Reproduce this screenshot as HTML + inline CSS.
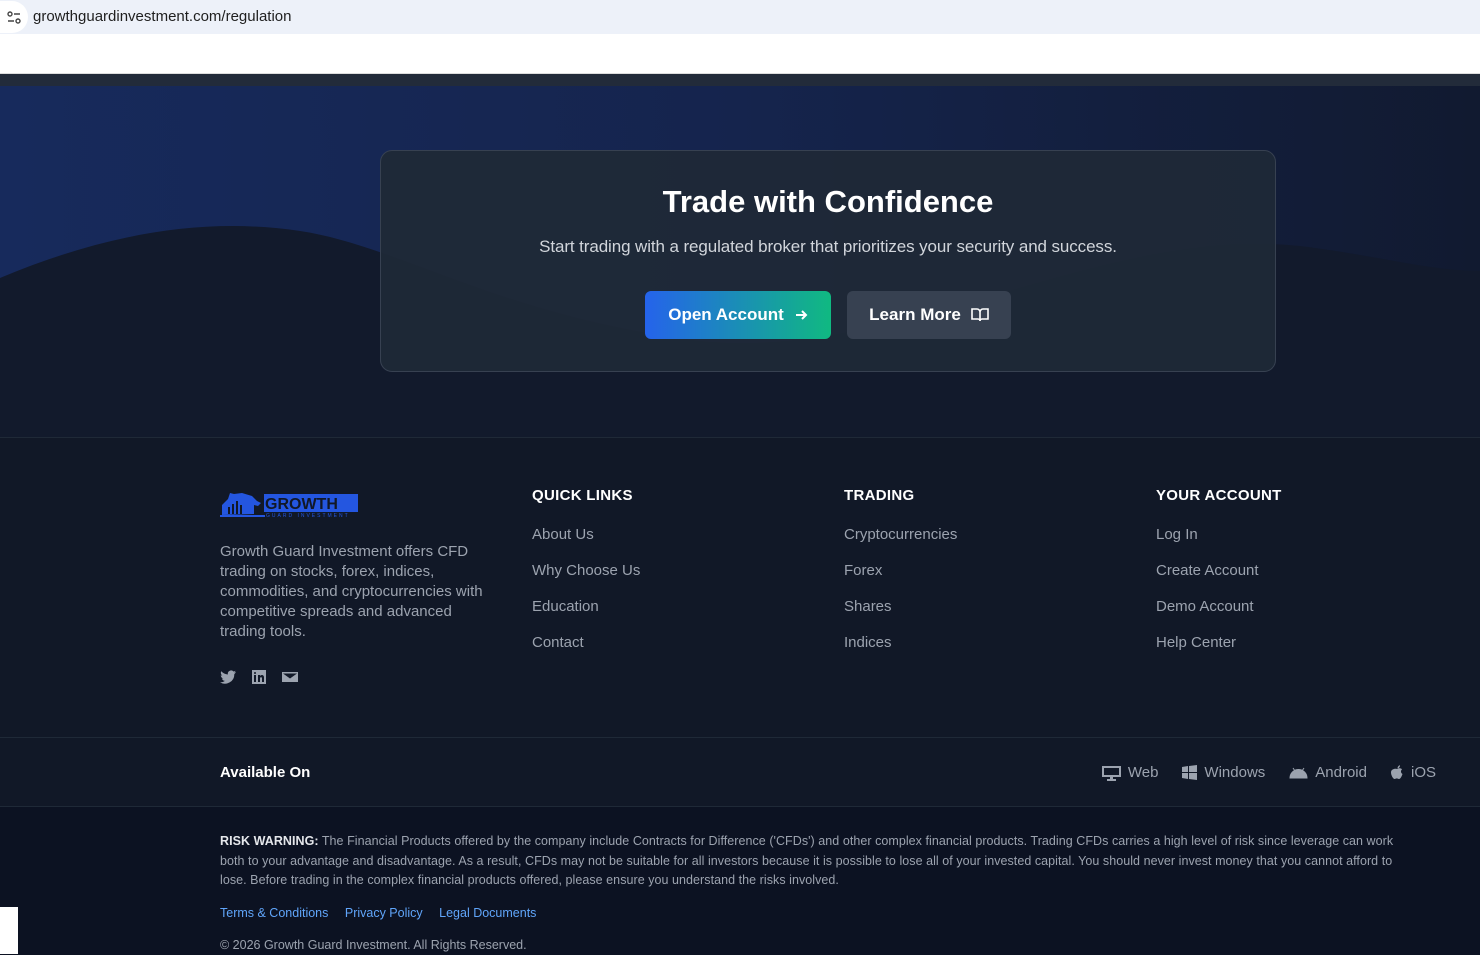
<!DOCTYPE html>
<html><head><meta charset="utf-8"><style>
*{margin:0;padding:0;box-sizing:border-box}
body{width:1480px;height:954px;overflow:hidden;font-family:"Liberation Sans",sans-serif;background:#0f1626;position:relative}
.addr{position:absolute;left:0;top:0;width:1480px;height:34px;background:#edf1f9}
.addr .ic{position:absolute;left:0;top:1px;width:28px;height:32px;background:#fff;border-radius:0 16px 16px 0}
.addr span{position:absolute;left:33px;top:8px;font-size:15px;color:#1f1f1f}
.white{position:absolute;top:34px;left:0;width:1480px;height:40px;background:#fff;border-bottom:1px solid #ddd}
.bar{position:absolute;top:74px;left:0;width:1480px;height:12px;background:#222b3a}
.hero{position:absolute;top:86px;left:0;width:1480px;height:351px;background:linear-gradient(90deg,#172a5c 0%,#15244d 50%,#111a30 100%);overflow:hidden}
.card{position:absolute;left:380px;top:150px;width:896px;height:222px;border:1px solid #374151;border-radius:12px;background:rgba(31,41,55,.95);text-align:center}
.card h1{margin-top:33px;font-size:31px;color:#fff;font-weight:700}
.card p{margin-top:17px;font-size:17px;color:#d1d5db;letter-spacing:-0.1px}
.btns{position:absolute;top:140px;left:0;width:100%;display:flex;justify-content:center;gap:16px}
.b{height:48px;border-radius:6px;color:#fff;font-weight:700;font-size:17px;display:flex;align-items:center;justify-content:center;gap:10px}
.b1{width:186px;background:linear-gradient(90deg,#2563eb,#10b981)}
.b2{width:164px;background:#374151}
.foot{position:absolute;top:437px;left:0;width:1480px;height:517px;background:#111827;border-top:1px solid #1f2937}
.col{position:absolute;top:49px}
.col h4{color:#fff;font-size:15px;letter-spacing:.3px;font-weight:700}
.col a{display:block;color:#9ca3af;font-size:15px;margin-top:20px;text-decoration:none;line-height:16px}
.col h4+a{margin-top:23px}
.desc{position:absolute;left:220px;top:104px;width:275px;color:#9ca3af;font-size:15px;line-height:20px}
.line{position:absolute;left:0;width:1480px;height:1px;background:#1f2937}
.avail{position:absolute;left:220px;top:326px;color:#fff;font-weight:700;font-size:15px}
.plat{position:absolute;right:44px;top:326px;display:flex;gap:24px;color:#9ca3af;font-size:15px}
.plat span{display:flex;align-items:center;gap:7px}
.risk{position:absolute;top:369px;left:0;width:1480px;height:148px;background:#0c1222}
.risk p{position:absolute;left:220px;top:25px;width:1192px;font-size:12.5px;line-height:19.6px;color:#9ca3af;letter-spacing:.05px}
.risk b{color:#e5e7eb}
.links{position:absolute;left:220px;top:99px;font-size:12.5px;color:#60a5fa}
.links span{margin-right:13px}
.copy{position:absolute;left:220px;top:131px;font-size:12.5px;color:#9ca3af}
</style></head><body>
<div class="addr"><div class="ic"><svg width="16" height="16" style="position:absolute;left:6px;top:9px" viewBox="0 0 16 16" fill="none" stroke="#444" stroke-width="1.4"><circle cx="4" cy="4" r="2"/><path d="M8 4h6M2 11h6"/><circle cx="12" cy="11" r="2"/></svg></div><span>growthguardinvestment.com/regulation</span></div>
<div class="white"></div>
<div class="bar"></div>
<div class="hero">
<svg width="1480" height="351" style="position:absolute;left:0;top:0"><path d="M0 192 C100 150 200 130 300 145 C400 160 500 230 700 255 C900 275 1100 140 1300 160 C1380 170 1430 185 1480 185 L1480 351 L0 351Z" fill="#121a2c"/></svg>
</div>
<div class="card"><h1>Trade with Confidence</h1><p>Start trading with a regulated broker that prioritizes your security and success.</p>
<div class="btns"><div class="b b1">Open Account <svg width="14" height="14" viewBox="0 0 14 14" fill="none" stroke="#fff" stroke-width="2"><path d="M2 7h10M8 3l4 4-4 4"/></svg></div><div class="b b2">Learn More <svg width="18" height="16" viewBox="0 0 18 16" fill="none" stroke="#fff" stroke-width="1.6"><path d="M1 2h5a3 3 0 0 1 3 3v9a2 2 0 0 0-2-2H1zM17 2h-5a3 3 0 0 0-3 3v9a2 2 0 0 1 2-2h6z"/></svg></div></div></div>
<div class="foot">
<svg style="position:absolute;left:220px;top:47px" width="140" height="34" viewBox="0 0 140 34"><path d="M2 30V20l6-6 2-6 4 1 8-1 10 3 5 5 4 2-3 3-4-1v9z" fill="#2456e0"/><g fill="#111827"><rect x="8" y="22" width="2" height="7"/><rect x="12" y="19" width="2" height="10"/><rect x="16" y="16" width="2" height="13"/><rect x="20" y="20" width="2" height="9"/></g><rect x="0" y="30" width="45" height="2" fill="#2456e0"/><rect x="44" y="9" width="94" height="18" fill="#2456e0"/><text x="45" y="24" font-size="16" font-weight="700" fill="#111827" font-family="Liberation Sans">GROWTH</text><text x="46" y="32" font-size="5" fill="#2456e0" letter-spacing="2" font-family="Liberation Sans">GUARD INVESTMENT</text></svg>
<div class="desc">Growth Guard Investment offers CFD trading on stocks, forex, indices, commodities, and cryptocurrencies with competitive spreads and advanced trading tools.</div>
<svg style="position:absolute;left:220px;top:231px" width="80" height="16" viewBox="0 0 80 16" fill="#9ca3af"><path d="M16 3c-.6.3-1.2.4-1.9.5.7-.4 1.2-1 1.4-1.8-.6.4-1.3.6-2 .8a3.3 3.3 0 0 0-5.6 3C5.200 5.400 2.900 4.200 1.300 2.300.4 3.800.9 5.700 2.300 6.600c-.5 0-1-.2-1.500-.4 0 1.600 1.100 3 2.600 3.300-.5.100-1 .2-1.500.1.400 1.300 1.700 2.300 3.100 2.300A6.600 6.600 0 0 1 0 13.200 9.300 9.300 0 0 0 14.300 5c.7-.5 1.300-1.100 1.700-2z"/><path d="M32 1h14v14H32zM34 6v7h2V6zm1-3a1 1 0 1 0 0 2 1 1 0 0 0 0-2zm3 3v7h2V9c0-1 2-1 2 0v4h2V8.500c0-3-3-3-4-1.500V6z" fill-rule="evenodd"/><path d="M62 3h16v10H62zm1 1.500 7 5 7-5" /></svg>
<div class="col" style="left:532px"><h4>QUICK LINKS</h4><a>About Us</a><a>Why Choose Us</a><a>Education</a><a>Contact</a></div>
<div class="col" style="left:844px"><h4>TRADING</h4><a>Cryptocurrencies</a><a>Forex</a><a>Shares</a><a>Indices</a></div>
<div class="col" style="left:1156px"><h4>YOUR ACCOUNT</h4><a>Log In</a><a>Create Account</a><a>Demo Account</a><a>Help Center</a></div>
<div class="line" style="top:299px"></div>
<div class="avail">Available On</div>
<div class="plat"><span><svg width="19" height="16" viewBox="0 0 19 16" fill="#9ca3af"><path d="M0 1h19v11H11v2h3v2H5v-2h3v-2H0zm2 2v7h15V3z"/></svg>Web</span><span><svg width="15" height="15" viewBox="0 0 15 15" fill="#9ca3af"><path d="M0 2l6-1v6H0zM7 1l8-1v7H7zM0 8h6v6l-6-1zM7 8h8v7l-8-1z"/></svg>Windows</span><span><svg width="19" height="12" viewBox="0 0 19 12" fill="#9ca3af"><path d="M1 11a8.500 8.500 0 0 1 17 0z M4 1l2 3M15 1l-2 3" stroke="#9ca3af"/></svg>Android</span><span><svg width="13" height="15" viewBox="0 0 13 15" fill="#9ca3af"><path d="M6.500 4C8 3 10 3 11 4.500 9.500 5.500 9.600 8 11.500 9 10.800 11 9.500 14 8 14c-1 0-1.300-.6-2.200-.6S4.500 14 3.700 14C2 14 0 10 0 7.500 0 4 4 3.300 6.500 4zM6.500 3.500C6.500 2 7.500 .5 9 .3 9 2 8 3.300 6.500 3.500z"/></svg>iOS</span></div>
<div class="line" style="top:368px"></div>
<div class="risk"><p><b>RISK WARNING:</b> The Financial Products offered by the company include Contracts for Difference ('CFDs') and other complex financial products. Trading CFDs carries a high level of risk since leverage can work both to your advantage and disadvantage. As a result, CFDs may not be suitable for all investors because it is possible to lose all of your invested capital. You should never invest money that you cannot afford to lose. Before trading in the complex financial products offered, please ensure you understand the risks involved.</p>
<div class="links"><span>Terms &amp; Conditions</span> <span>Privacy Policy</span> <span>Legal Documents</span></div>
<div class="copy">© 2026 Growth Guard Investment. All Rights Reserved.</div></div>
</div>
<div style="position:absolute;left:0;top:907px;width:18px;height:47px;background:#fff"></div>
</body></html>
